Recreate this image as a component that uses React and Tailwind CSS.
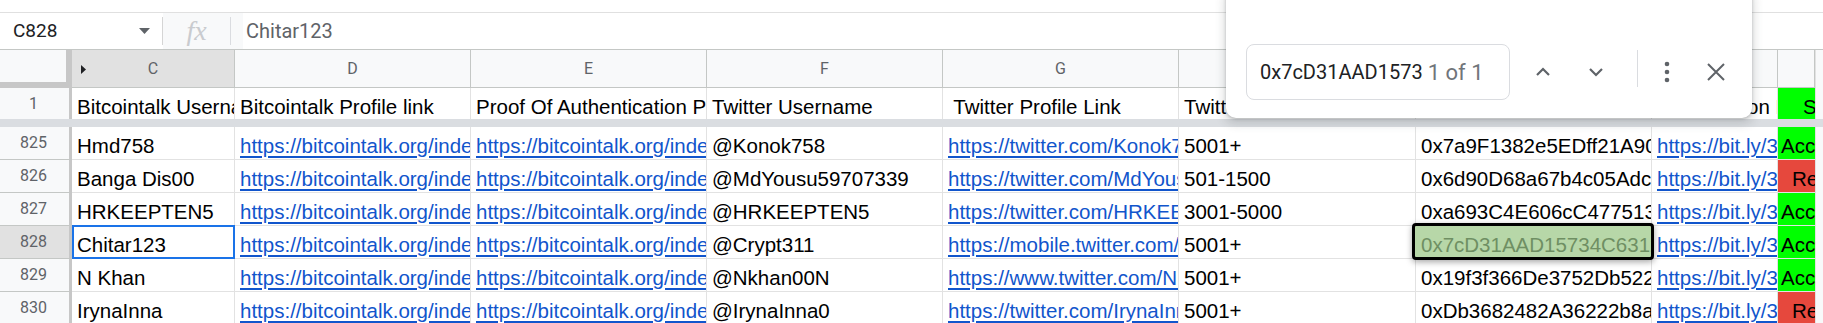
import React from 'react';

const COLS = [
  { key: 'C', w: 'w-[163px]' },
  { key: 'D', w: 'w-[236px]' },
  { key: 'E', w: 'w-[236px]' },
  { key: 'F', w: 'w-[236px]' },
  { key: 'G', w: 'w-[236px]' },
  { key: 'H', w: 'w-[237px]' },
  { key: 'I', w: 'w-[236px]' },
  { key: 'J', w: 'w-[126px]' },
  { key: 'K', w: 'w-[37px]' },
];

const HEADERS = [
  'Bitcointalk Username',
  'Bitcointalk Profile link',
  'Proof Of Authentication Post',
  'Twitter Username',
  ' Twitter Profile Link',
  'Twitter Followers',
  'Wallet Address (BEP-20)',
  'Participation Proof',
];

const ROWS = [
  {
    n: 825, user: 'Hmd758', uid: '3493521', tw: '@Konok758',
    twLink: 'https://twitter.com/Konok758', followers: '5001+',
    wallet: '0x7a9F1382e5EDff21A90cB3e1d4A7', ok: true,
  },
  {
    n: 826, user: 'Banga Dis00', uid: '3512867', tw: '@MdYousu59707339',
    twLink: 'https://twitter.com/MdYousu59707339', followers: '501-1500',
    wallet: '0x6d90D68a67b4c05Adc2F91e7B3', ok: false,
  },
  {
    n: 827, user: 'HRKEEPTEN5', uid: '3498210', tw: '@HRKEEPTEN5',
    twLink: 'https://twitter.com/HRKEEPTEN5', followers: '3001-5000',
    wallet: '0xa693C4E606cC4775130dF2a8E1', ok: true,
  },
  {
    n: 828, user: 'Chitar123', uid: '3501174', tw: '@Crypt311',
    twLink: 'https://mobile.twitter.com/Crypt311', followers: '5001+',
    wallet: '0x7cD31AAD15734C6312eA09b5F4', ok: true, active: true,
  },
  {
    n: 829, user: 'N Khan', uid: '3487735', tw: '@Nkhan00N',
    twLink: 'https://www.twitter.com/Nkhan00N', followers: '5001+',
    wallet: '0x19f3f366De3752Db5223aE7c90', ok: true,
  },
  {
    n: 830, user: 'IrynaInna', uid: '3479046', tw: '@IrynaInna0',
    twLink: 'https://twitter.com/IrynaInna0', followers: '5001+',
    wallet: '0xDb3682482A36222b8a4C1f07E9', ok: false,
  },
];

const Link = ({ children }) => (
  <span className="text-[#1155cc] underline decoration-[1.5px] underline-offset-[3px]">{children}</span>
);

// plain grid cell, text sits on the bottom like sheets does
const Cell = ({ w, children, className = '' }) => (
  <div className={`${w} shrink-0 h-full border-r border-b border-[#e2e2e2] overflow-hidden whitespace-pre flex items-end pl-[5px] pb-[1px] leading-[24px] ${className}`}>
    {children}
  </div>
);

const RowHead = ({ n, selected }) => (
  <div className={`w-[72px] shrink-0 h-full border-r-[3px] border-r-[#c7c7c7] border-b border-b-[#c4c7c5] flex items-center justify-center font-['Roboto',sans-serif] text-[16px] text-[#5f6368] pr-[2px] ${selected ? 'bg-[#e1e1e1]' : 'bg-[#f8f9fa]'}`}>
    {n}
  </div>
);

const Gutter = () => <div className="flex-1 h-full bg-[#f8f9fa] border-l border-[#e2e2e2]" />;

const FindBar = () => (
  <div className="absolute left-[1226px] -top-[12px] w-[526px] h-[130px] bg-white rounded-[10px] shadow-[0_1px_3px_rgba(60,64,67,0.3),0_4px_8px_3px_rgba(60,64,67,0.15)] flex items-start pt-[56px] pl-[20px] z-30">
    <div className="w-[264px] h-[56px] border border-[#dadce0] rounded-[8px] flex items-center pl-[13px] font-['Roboto',sans-serif]">
      <span className="text-[20px] text-[#202124]">0x7cD31AAD1573</span>
      <span className="text-[22px] text-[#70757a] ml-[5px]">1 of 1</span>
    </div>
    <div className="ml-[7px] w-[52px] h-[56px] flex items-center justify-center">
      <svg width="16" height="10" viewBox="0 0 16 10">
        <path d="M2 8 L8 2 L14 8" stroke="#5f6368" strokeWidth="2.2" fill="none" />
      </svg>
    </div>
    <div className="w-[54px] h-[56px] flex items-center justify-center">
      <svg width="16" height="10" viewBox="0 0 16 10">
        <path d="M2 2 L8 8 L14 2" stroke="#5f6368" strokeWidth="2.2" fill="none" />
      </svg>
    </div>
    <div className="ml-[14px] mt-[6px] w-px h-[37px] bg-[#dadce0]" />
    <div className="w-[58px] h-[56px] flex items-center justify-center">
      <svg width="6" height="22" viewBox="0 0 6 22">
        <circle cx="3" cy="3" r="2.3" fill="#5f6368" />
        <circle cx="3" cy="11" r="2.3" fill="#5f6368" />
        <circle cx="3" cy="19" r="2.3" fill="#5f6368" />
      </svg>
    </div>
    <div className="w-[40px] h-[56px] flex items-center justify-center">
      <svg width="20" height="20" viewBox="0 0 20 20">
        <path d="M2 2 L18 18 M18 2 L2 18" stroke="#5f6368" strokeWidth="2" fill="none" />
      </svg>
    </div>
  </div>
);

const App = () => {
  return (
    <div className="relative w-[1823px] h-[323px] overflow-hidden bg-white font-['Liberation_Sans',Arial,sans-serif] text-[20.5px] text-black">
      {/* top strip */}
      <div className="h-[13px] border-b border-[#e0e0e0]" />

      {/* formula bar */}
      <div className="h-[37px] border-b border-[#c4c7c5] flex items-center">
        <div className="w-[162px] h-full flex items-center pl-[13px] pr-[12px]">
          <span className="font-['Roboto',sans-serif] text-[19px] text-[#202124]">C828</span>
          <svg className="ml-auto" width="11" height="6" viewBox="0 0 11 6">
            <path d="M0 0 L11 0 L5.5 6 Z" fill="#5f6368" />
          </svg>
        </div>
        <div className="w-px h-[28px] bg-[#d5d5d5]" />
        <div className="w-[80px] h-full bg-[#f8f9fa] flex items-center">
          <span className="w-[67px] text-center font-['Liberation_Serif',serif] italic text-[28px] text-[#c9cbcf] leading-none">fx</span>
          <div className="w-px h-[28px] bg-[#dadce0]" />
        </div>
        <span className="ml-[3px] font-['Roboto',sans-serif] text-[20px] text-[#5f6368]">Chitar123</span>
      </div>

      {/* column letters */}
      <div className="flex h-[38px]">
        <div className="w-[72px] shrink-0 h-full bg-[#f8f9fa] border-r-[6px] border-b-[6px] border-[#c7c7c7]" />
        {COLS.map((c) => (
          <div
            key={c.key}
            className={`${c.w} shrink-0 h-full border-r border-b border-[#c4c7c5] flex items-center justify-center relative font-['Roboto',sans-serif] text-[16px] text-[#5f6368] ${c.key === 'C' ? 'bg-[#e1e1e1]' : 'bg-[#f8f9fa]'}`}
          >
            {c.key === 'C' && (
              <svg className="absolute left-[9px] top-[15px]" width="5" height="9" viewBox="0 0 5 9">
                <path d="M0 0 L5 4.5 L0 9 Z" fill="#202124" />
              </svg>
            )}
            {c.key !== 'K' && c.key}
          </div>
        ))}
        <Gutter />
      </div>

      {/* header row 1 */}
      <div className="flex h-[31px]">
        <div className="w-[72px] shrink-0 h-full bg-[#f8f9fa] border-r-[3px] border-[#c7c7c7] flex items-center justify-center font-['Roboto',sans-serif] text-[16px] text-[#5f6368] pr-[2px]">
          1
        </div>
        {COLS.slice(0, 8).map((c, i) => (
          <div key={c.key} className={`${c.w} shrink-0 h-full border-r border-[#e2e2e2] overflow-hidden whitespace-pre flex items-end pl-[5px] leading-[24px]`}>
            {HEADERS[i]}
          </div>
        ))}
        <div className="w-[37px] shrink-0 h-full bg-[#00ff00] overflow-hidden whitespace-pre flex items-end pl-[25px] leading-[24px]">
          Status
        </div>
        <Gutter />
      </div>

      {/* frozen divider */}
      <div className="h-[8px] bg-[#dadde1]" />

      {ROWS.map((r) => (
        <div key={r.n} className="flex h-[33px]">
          <RowHead n={r.n} selected={r.active} />
          <Cell w="w-[163px]" className={r.active ? 'relative overflow-visible' : ''}>
            {r.active && (
              <div className="absolute left-0 -top-[1px] -right-[1px] -bottom-[1px] border-2 border-[#1a73e8]" />
            )}
            {r.user}
          </Cell>
          <Cell w="w-[236px]">
            <Link>{`https://bitcointalk.org/index.php?action=profile;u=${r.uid}`}</Link>
          </Cell>
          <Cell w="w-[236px]">
            <Link>{`https://bitcointalk.org/index.php?topic=5440000.msg${r.uid}`}</Link>
          </Cell>
          <Cell w="w-[236px]">{r.tw}</Cell>
          <Cell w="w-[236px]">
            <Link>{r.twLink}</Link>
          </Cell>
          <Cell w="w-[237px]">{r.followers}</Cell>
          {r.active ? (
            <div className="w-[236px] shrink-0 h-full border-r border-b border-[#e2e2e2] relative">
              <div className="absolute -left-[4px] -top-[3px] -right-[3px] -bottom-[2px] z-20 bg-[#b7d7a8] border-[3px] border-black rounded-[4px] shadow-[0_2px_6px_rgba(0,0,0,0.35)]" />
              <div className="relative z-20 h-full overflow-hidden whitespace-pre flex items-end pl-[5px] pb-[1px] leading-[24px] text-[#6f8f63]">
                {r.wallet}
              </div>
            </div>
          ) : (
            <Cell w="w-[236px]">{r.wallet}</Cell>
          )}
          <Cell w="w-[126px]">
            <Link>https://bit.ly/3xQ8vTk</Link>
          </Cell>
          <div
            className={`w-[37px] shrink-0 h-full border-b border-[#e2e2e2] overflow-hidden whitespace-pre flex items-end pb-[1px] leading-[24px] ${r.ok ? 'bg-[#00ff00] pl-[3px]' : 'bg-[#e6483d] pl-[14px]'}`}
          >
            {r.ok ? 'Accepted' : 'Rejected'}
          </div>
          <Gutter />
        </div>
      ))}

      <FindBar />
    </div>
  );
};

export default App;
